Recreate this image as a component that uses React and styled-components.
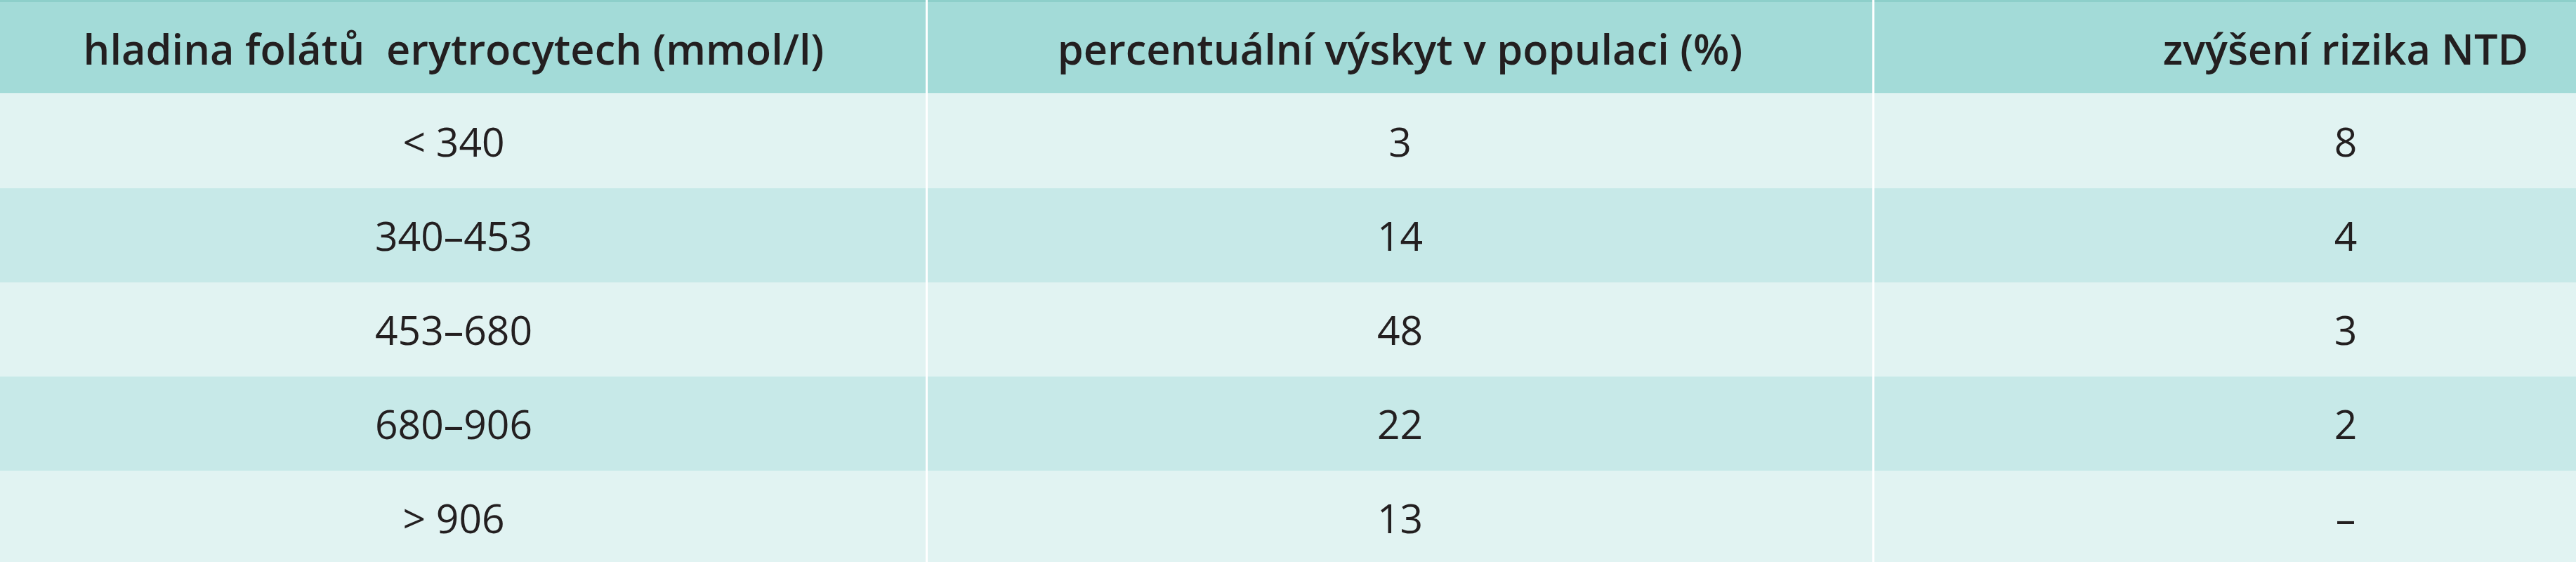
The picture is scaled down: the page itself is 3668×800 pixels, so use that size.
import React from "react";
import styled, { createGlobalStyle } from "styled-components";

const GlobalStyle = createGlobalStyle`
  html, body {
    margin: 0;
    padding: 0;
    background: #e1f3f2;
    overflow: hidden;
  }
  body {
    font-family: "Open Sans", "Noto Sans", "Liberation Sans", sans-serif;
    color: #231f20;
  }
`;

const Viewport = styled.div`
  width: 3668px;
  height: 800px;
  overflow: hidden;
  background: #e1f3f2;
`;

const Table = styled.div`
  display: grid;
  grid-template-columns: 1318px 1345px 1342px;
  grid-auto-rows: 134px;
  column-gap: 3px;
  row-gap: 0;
  width: max-content;
  background: #ffffff;
`;

const Cell = styled.div`
  display: flex;
  align-items: center;
  justify-content: center;
  box-sizing: border-box;
  padding-right: ${(p) => (p.$first ? "26px" : "0")};
  background: ${(p) => (p.$shade ? "#c7e9e8" : "#e1f3f2")};
  font-size: 57px;
  font-weight: 400;
  white-space: pre;
`;

const HeadCell = styled(Cell)`
  height: 133px;
  border-top: 3px solid #8dcfca;
  background: #a3dbd8;
  font-size: 59.5px;
  font-weight: 600;
`;

const headers = [
  "hladina folátů  erytrocytech (mmol/l)",
  "percentuální výskyt v populaci (%)",
  "zvýšení rizika NTD",
];

const rows = [
  ["< 340", "3", "8"],
  ["340–453", "14", "4"],
  ["453–680", "48", "3"],
  ["680–906", "22", "2"],
  ["> 906", "13", "–"],
];

export default function App() {
  return (
    <>
      <GlobalStyle />
      <Viewport>
        <Table>
          {headers.map((h, i) => (
            <HeadCell key={h} $first={i === 0}>
              {h}
            </HeadCell>
          ))}
          {rows.map((r, ri) =>
            r.map((v, ci) => (
              <Cell key={`${ri}-${ci}`} $first={ci === 0} $shade={ri % 2 === 1}>
                {v}
              </Cell>
            ))
          )}
        </Table>
      </Viewport>
    </>
  );
}
